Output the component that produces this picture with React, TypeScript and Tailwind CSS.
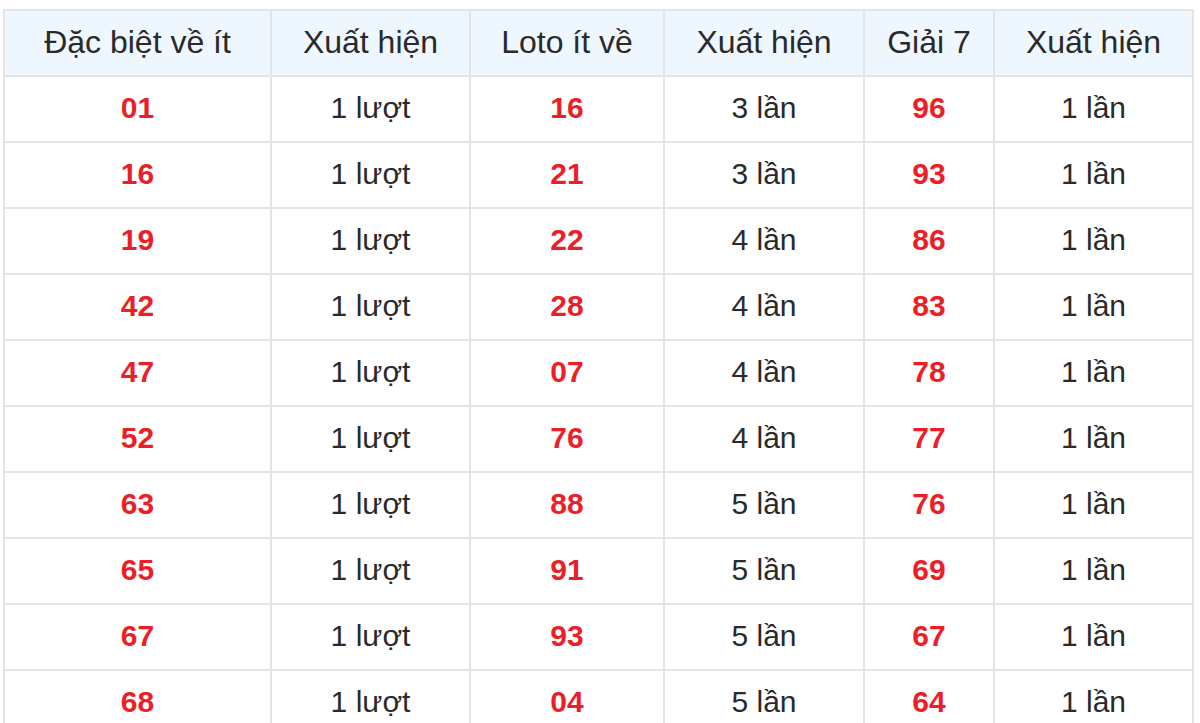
const rows: [string, string, string, string, string, string][] = [
  ['01', '1 lượt', '16', '3 lần', '96', '1 lần'],
  ['16', '1 lượt', '21', '3 lần', '93', '1 lần'],
  ['19', '1 lượt', '22', '4 lần', '86', '1 lần'],
  ['42', '1 lượt', '28', '4 lần', '83', '1 lần'],
  ['47', '1 lượt', '07', '4 lần', '78', '1 lần'],
  ['52', '1 lượt', '76', '4 lần', '77', '1 lần'],
  ['63', '1 lượt', '88', '5 lần', '76', '1 lần'],
  ['65', '1 lượt', '91', '5 lần', '69', '1 lần'],
  ['67', '1 lượt', '93', '5 lần', '67', '1 lần'],
  ['68', '1 lượt', '04', '5 lần', '64', '1 lần'],
];

const headers = ['Đặc biệt về ít', 'Xuất hiện', 'Loto ít về', 'Xuất hiện', 'Giải 7', 'Xuất hiện'];
const widths = ['w-[267px]', 'w-[199px]', 'w-[194px]', 'w-[200px]', 'w-[130px]', 'w-[199px]'];

export default function App() {
  return (
    <div className="h-[723px] overflow-hidden bg-white pt-[9px] pl-[3px] font-['Liberation_Sans',Arial,sans-serif]">
      <table className="border-collapse table-fixed w-[1190px]">
        <thead>
          <tr className="bg-[#eef6fe] h-[66px]">
            {headers.map((h, i) => (
              <th key={i} className={`${widths[i]} border-2 border-[#e2e4e8] pb-[2px] text-center font-normal text-[32px] text-[#2a2a2a]`}>
                {h}
              </th>
            ))}
          </tr>
        </thead>
        <tbody>
          {rows.map((r, ri) => (
            <tr key={ri} className="h-[66px]">
              {r.map((c, ci) => (
                <td
                  key={ci}
                  className={
                    ci % 2 === 0
                      ? 'border-2 border-[#e2e4e8] pb-[3px] text-center text-[30px] font-bold text-[#ec1f28]'
                      : 'border-2 border-[#e2e4e8] pb-[3px] text-center text-[30px] text-[#2a2a2a]'
                  }
                >
                  {c}
                </td>
              ))}
            </tr>
          ))}
        </tbody>
      </table>
    </div>
  );
}
